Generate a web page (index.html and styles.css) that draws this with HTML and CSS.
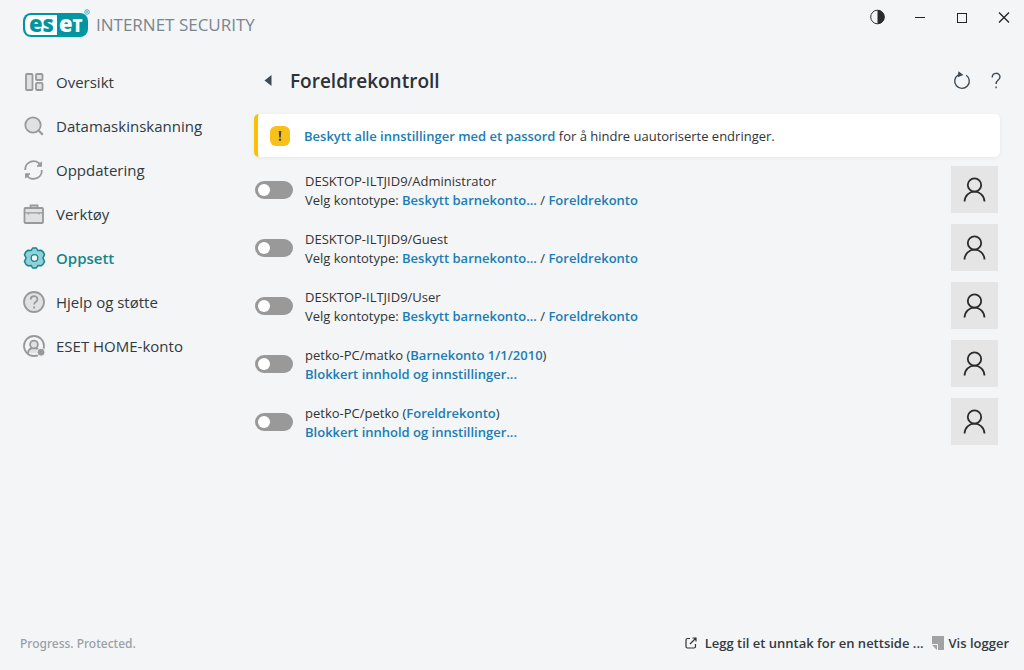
FILE: index.html
```
<!DOCTYPE html>
<html lang="nb">
<head>
    <meta charset="UTF-8">
    <meta name="viewport" content="width=device-width, initial-scale=1.0">
    <title>ESET Internet Security</title>
    <link rel="stylesheet" href="styles.css">
</head>
<body>
    <svg class="symbols" aria-hidden="true">
        <symbol id="person" viewBox="0 0 24 26">
            <circle cx="11.500" cy="8" r="6.700"/>
            <path d="M1.500 24.500C1.800 18.600 6.300 14.700 11.500 14.700s9.700 3.900 10 9.800"/>
        </symbol>
    </svg>

    <header class="titlebar">
        <div class="brand">
            <svg class="logo" width="68" height="32" viewBox="0 0 68 32" role="img" aria-label="ESET">
                <rect x="1" y="5" width="65" height="24" rx="8" fill="#0096a1"/>
                <path d="M35 7H9.500C4.500 7 3 10 3 17s1.500 10 6.500 10H35z" fill="#fff"/>
                <text class="logo-text" x="7" y="24" fill="#0096a1">es</text>
                <text class="logo-text" x="37" y="24" fill="#fff">e<tspan class="logo-cap">T</tspan></text>
                <circle cx="65" cy="4" r="2.300" fill="none" stroke="#0096a1" stroke-width=".7"/>
                <path d="M64.400 5V3h.8a.5.5 0 0 1 0 1h-.8m.8 0 .5 1" fill="none" stroke="#0096a1" stroke-width=".4"/>
            </svg>
            <span class="product">INTERNET SECURITY</span>
        </div>
        <div class="window-buttons">
            <button type="button" aria-label="Kontrast">
                <svg width="16" height="16" viewBox="0 0 16 16"><circle cx="7.500" cy="8" r="6.800" fill="none" stroke="#333"/><path d="M7.500 1a7 7 0 0 1 0 14z" fill="#2b2b2b"/></svg>
            </button>
            <button type="button" aria-label="Minimer">
                <svg width="16" height="16" viewBox="0 0 16 16"><path d="M3 8.500h10" stroke="#222"/></svg>
            </button>
            <button type="button" aria-label="Maksimer">
                <svg width="16" height="16" viewBox="0 0 16 16"><rect x="3.500" y="4.500" width="9" height="9" fill="none" stroke="#222"/></svg>
            </button>
            <button type="button" aria-label="Lukk">
                <svg width="16" height="16" viewBox="0 0 16 16"><path d="m3 3.500 10 10m0-10-10 10" stroke="#222" stroke-width="1.300"/></svg>
            </button>
        </div>
    </header>

    <div class="layout">
        <nav class="sidebar">
            <a href="#">
                <svg class="icon" viewBox="0 0 24 24"><rect x="4" y="4" width="6.500" height="16" rx="1"/><rect x="14" y="4" width="6.500" height="6" rx="1"/><rect x="14" y="12.800" width="6.500" height="7.200" rx="1"/></svg>
                Oversikt
            </a>
            <a href="#">
                <svg class="icon" viewBox="0 0 24 24"><circle cx="11" cy="11" r="7.700"/><path d="m16.500 16.500 4.300 4.300" stroke-width="2.200"/></svg>
                Datamaskinskanning
            </a>
            <a href="#">
                <svg class="icon" viewBox="0 0 24 24"><path d="M3.200 12A8.300 8.300 0 0 1 18.500 7M19.800 12A8.300 8.300 0 0 1 4.500 17" fill="none"/><path d="M19.500 4V8.200h-4.500zM3.500 20v-4.200H8z" fill="#999" stroke-width="1"/></svg>
                Oppdatering
            </a>
            <a href="#">
                <svg class="icon" viewBox="0 0 24 24"><path d="M8.500 6V3.500h7V6" fill="none"/><rect x="2.500" y="6" width="18.500" height="15" rx="1"/><path d="M3 10.800h18M6.500 11v1.500M17 11v1.500" stroke-width="1.200"/></svg>
                Verktøy
            </a>
            <a href="#" class="active" aria-current="page">
                <svg class="icon" viewBox="0 0 24 24"><path d="M10.600 2h3.800L15.800 4.500 19 4.300Q21.500 5.500 22.500 8.600L20.900 12l1.600 3.400Q21.500 18.500 19 19.700L15.800 19.500 14.400 22h-3.800L9.200 19.500 6 19.700Q3.500 18.500 2.500 15.400L4.100 12 2.500 8.600Q3.500 5.500 6 4.300L9.200 4.500z" stroke-width="1.500" stroke-linejoin="round"/><circle cx="12.500" cy="12" r="3.300" fill="#f3f5f7" stroke-width="1.300"/></svg>
                Oppsett
            </a>
            <a href="#">
                <svg class="icon" viewBox="0 0 24 24"><circle cx="12" cy="12" r="10"/><path d="M8.700 9.500c0-4.400 6.800-4.400 6.800-.3 0 2.600-3.400 2.500-3.400 5.300M12.100 16.600v1.800" fill="none"/></svg>
                Hjelp og støtte
            </a>
            <a href="#">
                <svg class="icon" viewBox="0 0 24 24"><circle cx="12" cy="12" r="10" fill="none"/><path d="M6 19c.3-3.300 2.500-5 6-5s5.500 1.700 6 5"/><circle cx="12" cy="10.500" r="3.900"/><circle cx="19" cy="18.200" r="4" fill="#999" stroke="#f3f5f7" stroke-width="1"/></svg>
                ESET HOME-konto
            </a>
        </nav>

        <main class="content">
            <div class="page-head">
                <button type="button" class="back" aria-label="Tilbake">
                    <svg width="8" height="12" viewBox="0 0 8 12"><path d="M7.500 0v11L.5 5.500z" fill="#3e4b54"/></svg>
                </button>
                <h1>Foreldrekontroll</h1>
                <div class="tools">
                    <button type="button" aria-label="Oppdater">
                        <svg width="20" height="20" viewBox="0 0 20 20" fill="none" stroke="#3e4b54" stroke-width="1.400"><path d="M14.300 4.200a7.300 7.300 0 1 1-8.300-.2"/><path d="m7 1.500 3 2.200-3.500 1.400z" fill="#3e4b54"/></svg>
                    </button>
                    <button type="button" aria-label="Hjelp">
                        <svg width="20" height="20" viewBox="0 0 20 20" fill="none" stroke="#3e4b54" stroke-width="1.400"><path d="M6.200 6.500c0-5.600 7.800-5.300 7.800-.7 0 3.600-3.900 3-3.900 7.200M10.100 15.500v1.700"/></svg>
                    </button>
                </div>
            </div>

            <div class="notice">
                <svg width="20" height="20" viewBox="0 0 20 20"><rect width="20" height="20" rx="6" fill="#f8c01a"/><path d="M8.700 5h2.600l-.5 6.500H9.200z" fill="#444"/><circle cx="10" cy="13.800" r="1.200" fill="#444"/></svg>
                <p><a href="#">Beskytt alle innstillinger med et passord</a> for å hindre uautoriserte endringer.</p>
            </div>

            <ul class="accounts">
                <li>
                    <input type="checkbox" class="toggle" id="acc1">
                    <div class="info">
                        <label for="acc1">DESKTOP-ILTJID9/Administrator</label>
                        <p>Velg kontotype: <a href="#">Beskytt barnekonto...</a> / <a href="#">Foreldrekonto</a></p>
                    </div>
                    <div class="avatar"><svg><use href="#person"/></svg></div>
                </li>
                <li>
                    <input type="checkbox" class="toggle" id="acc2">
                    <div class="info">
                        <label for="acc2">DESKTOP-ILTJID9/Guest</label>
                        <p>Velg kontotype: <a href="#">Beskytt barnekonto...</a> / <a href="#">Foreldrekonto</a></p>
                    </div>
                    <div class="avatar"><svg><use href="#person"/></svg></div>
                </li>
                <li>
                    <input type="checkbox" class="toggle" id="acc3">
                    <div class="info">
                        <label for="acc3">DESKTOP-ILTJID9/User</label>
                        <p>Velg kontotype: <a href="#">Beskytt barnekonto...</a> / <a href="#">Foreldrekonto</a></p>
                    </div>
                    <div class="avatar"><svg><use href="#person"/></svg></div>
                </li>
                <li>
                    <input type="checkbox" class="toggle" id="acc4">
                    <div class="info">
                        <p><label for="acc4">petko-PC/matko</label> (<a href="#">Barnekonto 1/1/2010</a>)</p>
                        <p><a href="#">Blokkert innhold og innstillinger...</a></p>
                    </div>
                    <div class="avatar"><svg><use href="#person"/></svg></div>
                </li>
                <li>
                    <input type="checkbox" class="toggle" id="acc5">
                    <div class="info">
                        <p><label for="acc5">petko-PC/petko</label> (<a href="#">Foreldrekonto</a>)</p>
                        <p><a href="#">Blokkert innhold og innstillinger...</a></p>
                    </div>
                    <div class="avatar"><svg><use href="#person"/></svg></div>
                </li>
            </ul>
        </main>
    </div>

    <footer class="footer">
        <span class="slogan">Progress. Protected.</span>
        <a href="#" class="exception">
            <svg width="12" height="12" viewBox="0 0 12 12" fill="none" stroke="#333" stroke-width="1.200"><path d="M5 1.500H2.500a1.500 1.500 0 0 0-1.500 1.500v6.500A1.500 1.500 0 0 0 2.500 11H9a1.500 1.500 0 0 0 1.500-1.500V7M5 7l6-6M7.500 1H11v3.500"/></svg>
            Legg til et unntak for en nettside ...
        </a>
        <a href="#" class="logs">
            <svg width="12" height="14" viewBox="0 0 12 14"><path d="M0 0h12v14H6V8H0zM0 9h5v5z" fill="#a0a2a5"/></svg>
            Vis logger
        </a>
    </footer>
</body>
</html>
```
FILE: styles.css
```
* {
    box-sizing: border-box;
}
body {
    margin: 0;
    min-height: 100vh;
    display: flex;
    flex-direction: column;
    background: #f3f5f7;
    color: #333;
    font-family: "Open Sans", "Noto Sans", sans-serif;
    font-size: 13px;
    line-height: 19px;
}
p, h1, ul {
    margin: 0;
    padding: 0;
}
a {
    color: #1b7db3;
    font-weight: 600;
    text-decoration: none;
}
button {
    display: flex;
    padding: 0;
    border: none;
    background: none;
    cursor: pointer;
}
.symbols {
    display: none;
}

/* title bar */
.titlebar {
    display: flex;
    justify-content: space-between;
    height: 60px;
    padding: 8px 12px 0 22px;
}
.brand {
    display: flex;
    gap: 6px;
}
.logo-text {
    font: 800 22px "Open Sans", sans-serif;
}
.logo-cap {
    font-size: 17px;
}
.product {
    color: #7b868d;
    font-size: 17px;
    line-height: 34px;
}
.window-buttons {
    display: flex;
    gap: 26px;
    height: 16px;
    margin-top: 1px;
}

/* layout */
.layout {
    flex: 1;
    display: flex;
}
.sidebar {
    width: 254px;
    padding-left: 22px;
    flex-shrink: 0;
}
.sidebar a {
    display: flex;
    align-items: center;
    gap: 10px;
    height: 44px;
    color: #2f3a42;
    font-size: 15px;
    font-weight: 400;
}
.sidebar a.active {
    color: #17868a;
    font-weight: 600;
}
.icon {
    width: 24px;
    height: 24px;
    fill: #dfe1e3;
    stroke: #999;
    stroke-width: 1.8;
}
.active .icon {
    fill: #8fd0da;
    stroke: #17868a;
}
.content {
    flex: 1;
    padding-right: 24px;
}
.page-head {
    display: flex;
    align-items: center;
    height: 42px;
    margin-bottom: 12px;
    padding-left: 10px;
}
.page-head h1 {
    flex: 1;
    margin-left: 18px;
    color: #2b3238;
    font-size: 19px;
    font-weight: 600;
}
.tools {
    display: flex;
    gap: 14px;
    margin-right: -6px;
}

.notice {
    display: flex;
    align-items: center;
    gap: 14px;
    height: 43px;
    padding-left: 12px;
    border-left: 4px solid #fbbf05;
    border-radius: 5px;
    background: #fff;
    box-shadow: 0 1px 4px rgba(0, 0, 0, 0.06);
}
.notice p {
    padding-top: 2px;
}

/* account list */
.accounts {
    display: flex;
    flex-direction: column;
    gap: 11px;
    margin-top: 9px;
    padding: 0 2px 0 1px;
    list-style: none;
}
.accounts li {
    display: flex;
    align-items: center;
    gap: 12px;
}
.toggle {
    appearance: none;
    display: flex;
    align-items: center;
    width: 38px;
    height: 18px;
    margin: 0;
    padding: 3px;
    border-radius: 9px;
    background: #999;
    cursor: pointer;
}
.toggle::before {
    content: "";
    width: 12px;
    height: 12px;
    border-radius: 50%;
    background: #fff;
}
.toggle:checked {
    justify-content: flex-end;
    background: #17868a;
}
.info {
    flex: 1;
    padding-top: 2px;
}
.avatar {
    display: flex;
    align-items: center;
    justify-content: center;
    width: 47px;
    height: 47px;
    background: #e5e5e5;
}
.avatar svg {
    width: 24px;
    height: 26px;
    fill: none;
    stroke: #2b2b2b;
    stroke-width: 1.8;
}

/* footer */
.footer {
    display: flex;
    align-items: center;
    height: 54px;
    padding: 0 15px 0 20px;
}
.footer a {
    display: flex;
    align-items: center;
    color: #333a40;
}
.slogan {
    flex: 1;
    color: #98a0a5;
    font-family: "Noto Sans", sans-serif;
    font-size: 12px;
    font-weight: 500;
}
.exception {
    gap: 8px;
    margin-right: 8px;
}
.logs {
    gap: 5px;
}
```
